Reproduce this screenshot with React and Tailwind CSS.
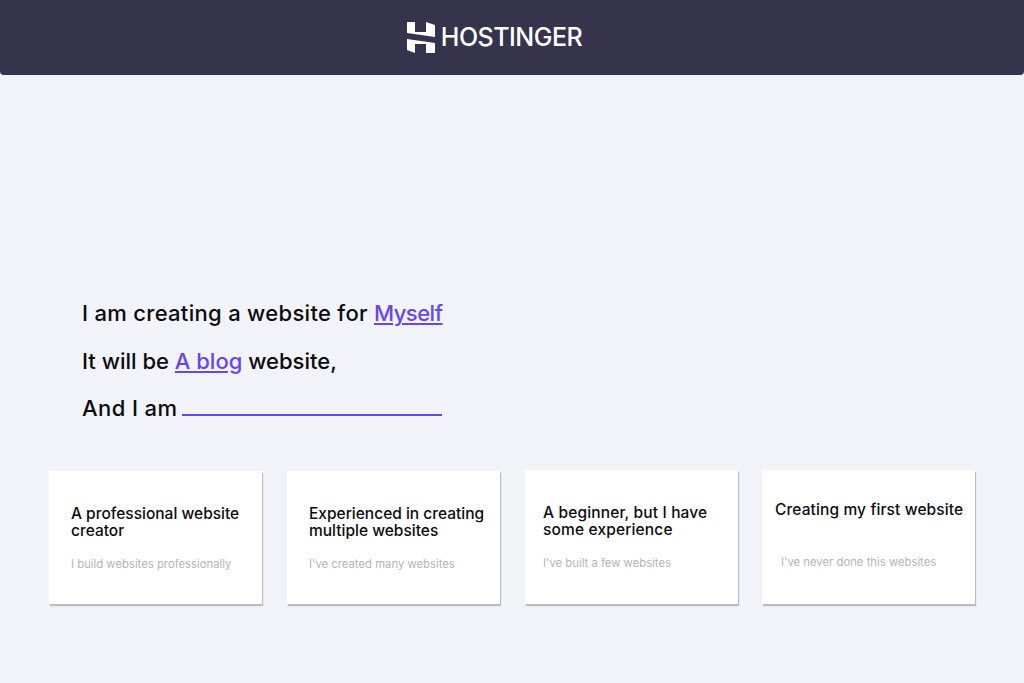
import React from "react";

const cards = [
  {
    title: ["A professional website", "creator"],
    text: "I build websites professionally",
    box: "h-[133px] pt-[34px] pl-[22px]",
    gap: "mt-[17px]",
    sub: "",
    track: "",
  },
  {
    title: ["Experienced in creating", "multiple websites"],
    text: "I've created many websites",
    box: "h-[133px] pt-[34px] pl-[22px]",
    gap: "mt-[17px]",
    sub: "",
    track: "",
  },
  {
    title: ["A beginner, but I have", "some experience"],
    text: "I've built a few websites",
    box: "h-[134px] pt-[34px] pl-[18px]",
    gap: "mt-[17px]",
    sub: "",
    track: "tracking-[0.15px]",
  },
  {
    title: ["Creating my first website"],
    text: "I've never done this websites",
    box: "h-[134px] pt-[31px] pl-[13px] -ml-px",
    gap: "mt-[36px]",
    sub: "pl-[6px]",
    track: "tracking-[0.12px]",
  },
];

function Logo() {
  return (
    <svg width="28" height="31" viewBox="0 0 28 31" fill="#ffffff" aria-hidden="true">
      <path d="M0 0 H8 V10 H19 V0 L28 3 V15 L0 11 Z" />
      <path d="M0 17 L28 21 V31 H19 V22 H8 V31 L0 28 Z" />
    </svg>
  );
}

function Card({ card }) {
  return (
    <div className={`w-[213px] bg-white shadow-[1px_2px_1px_#bcbcc0] ${card.box}`}>
      <h3 className={`text-[15.5px] leading-[17px] font-medium text-[#0b0b0f] ${card.track}`}>
        {card.title.map((line) => (
          <div key={line}>{line}</div>
        ))}
      </h3>
      <p className={`text-[11.3px] leading-[16px] text-[#b4b4b8] ${card.gap} ${card.sub}`}>{card.text}</p>
    </div>
  );
}

export default function App() {
  return (
    <div className="min-h-[683px] bg-[#f1f3f8] font-['Inter','Liberation_Sans',sans-serif]">
      <header className="h-[75px] bg-[#36344d] rounded-b-[4px] flex items-center justify-center gap-[6px] pr-[35px]">
        <Logo />
        <span className="text-white text-[25px] font-medium tracking-[-0.5px]">HOSTINGER</span>
      </header>
      <section className="pt-[215px] pl-[82px] text-[22px] font-medium text-[#0b0b0f]">
        <p className="h-[47.5px] leading-[47px]">
          <span className="tracking-[0.3px]">I am creating a website for </span>
          <a className="text-[#6747ec] underline tracking-[-0.5px]">Myself</a>
        </p>
        <p className="h-[47.5px] leading-[47px]">
          It will be <a className="text-[#6747ec] underline">A blog</a> website,
        </p>
        <div className="flex h-[47px] leading-[47px]">
          <span className="tracking-[0.4px] whitespace-nowrap">And I am</span>
          <span className="ml-[5px] mt-[29px] h-[2px] w-[260px] bg-[#6747ec]" />
        </div>
      </section>
      <section className="mt-[38px] px-[49px] flex items-end gap-[25px]">
        {cards.map((card) => (
          <Card key={card.text} card={card} />
        ))}
      </section>
    </div>
  );
}
